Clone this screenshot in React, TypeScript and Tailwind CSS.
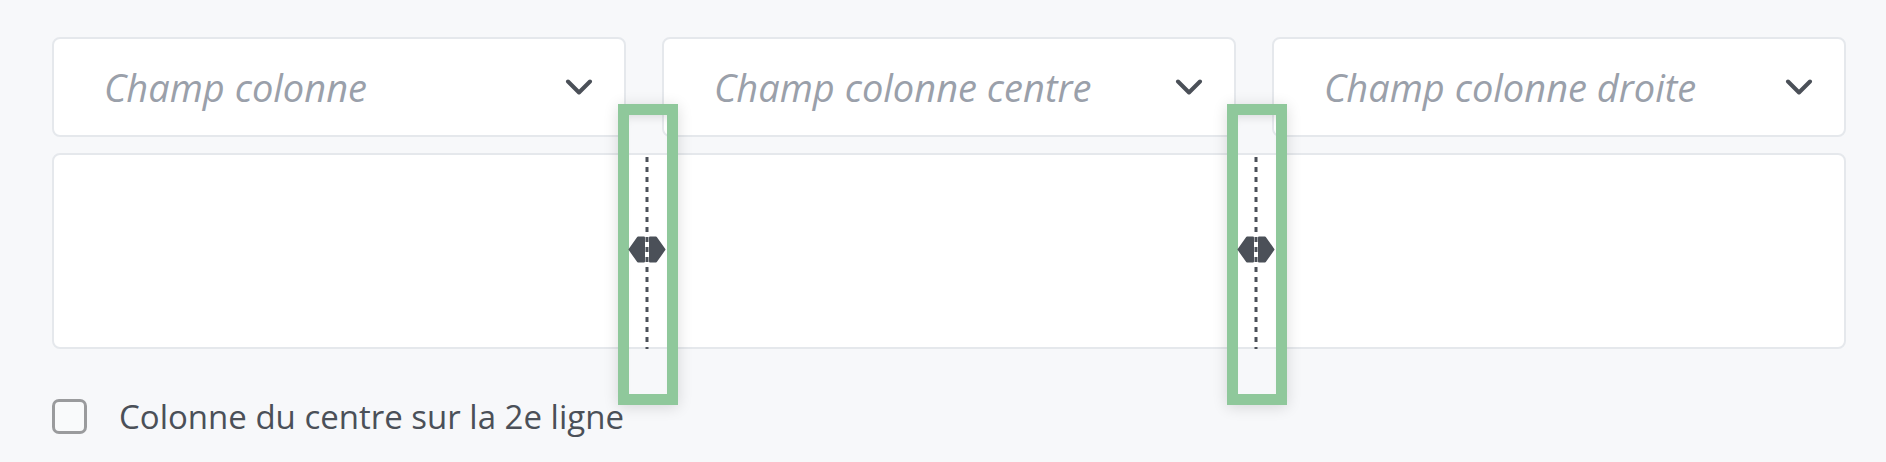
import React from 'react';

const Chevron = () => (
    <svg width="28" height="17" viewBox="0 0 28 17" fill="none" className="shrink-0">
        <path d="M3 2.5 L14 13.5 L25 2.5" stroke="#4b5058" strokeWidth="4" strokeLinecap="round" strokeLinejoin="round" />
    </svg>
);

const ChampSelect = ({ label }: { label: string }) => (
    <div className="flex h-[100px] items-center justify-between rounded-lg border-2 border-[#e5e8ec] bg-white pl-[50px] pr-[31px]">
        <span className="text-[38px] italic text-[#9aa0aa]">{label}</span>
        <Chevron />
    </div>
);

// poignée de redimensionnement entre deux colonnes
const Poignee = ({ left }: { left: number }) => (
    <div className="absolute top-[67px] h-[301px] w-[60px]" style={{ left }}>
        <div className="absolute inset-0 border-[11px] border-[#8fc89b] shadow-[0_2px_14px_rgba(0,0,0,0.14),inset_0_8px_10px_-6px_rgba(0,0,0,0.12)]" />
        <svg width="60" height="301" viewBox="0 0 60 301" className="absolute inset-0">
            <line x1="29" y1="53" x2="29" y2="245" stroke="#4b5058" strokeWidth="3" strokeDasharray="5 5" />
            <path d="M11.5 145.5 L20 133.5 L26 133.5 L26 157.5 L20 157.5 Z" fill="#4b5058" stroke="#4b5058" strokeWidth="2" strokeLinejoin="round" />
            <path d="M32 133.5 L38 133.5 L46.5 145.5 L38 157.5 L32 157.5 Z" fill="#4b5058" stroke="#4b5058" strokeWidth="2" strokeLinejoin="round" />
        </svg>
    </div>
);

export default function App() {
    return (
        <div className="min-h-screen bg-[#f7f8fa] pl-[52px] pr-[40px] pt-[37px] font-['Open_Sans',sans-serif]">
            <div className="relative">
                <div className="grid grid-cols-3 gap-[36px]">
                    <ChampSelect label="Champ colonne" />
                    <ChampSelect label="Champ colonne centre" />
                    <ChampSelect label="Champ colonne droite" />
                </div>
                <div className="mt-[16px] h-[196px] rounded-lg border-2 border-[#e5e8ec] bg-white" />
                <Poignee left={566} />
                <Poignee left={1175} />
            </div>
            <label className="mt-[43px] flex items-center gap-[32px]">
                <span className="h-[35px] w-[35px] rounded-[7px] border-[3px] border-[#9a9b9d] bg-[#f9fafb]" />
                <span className="text-[33px] text-[#4b5058]">Colonne du centre sur la 2e ligne</span>
            </label>
        </div>
    );
}
